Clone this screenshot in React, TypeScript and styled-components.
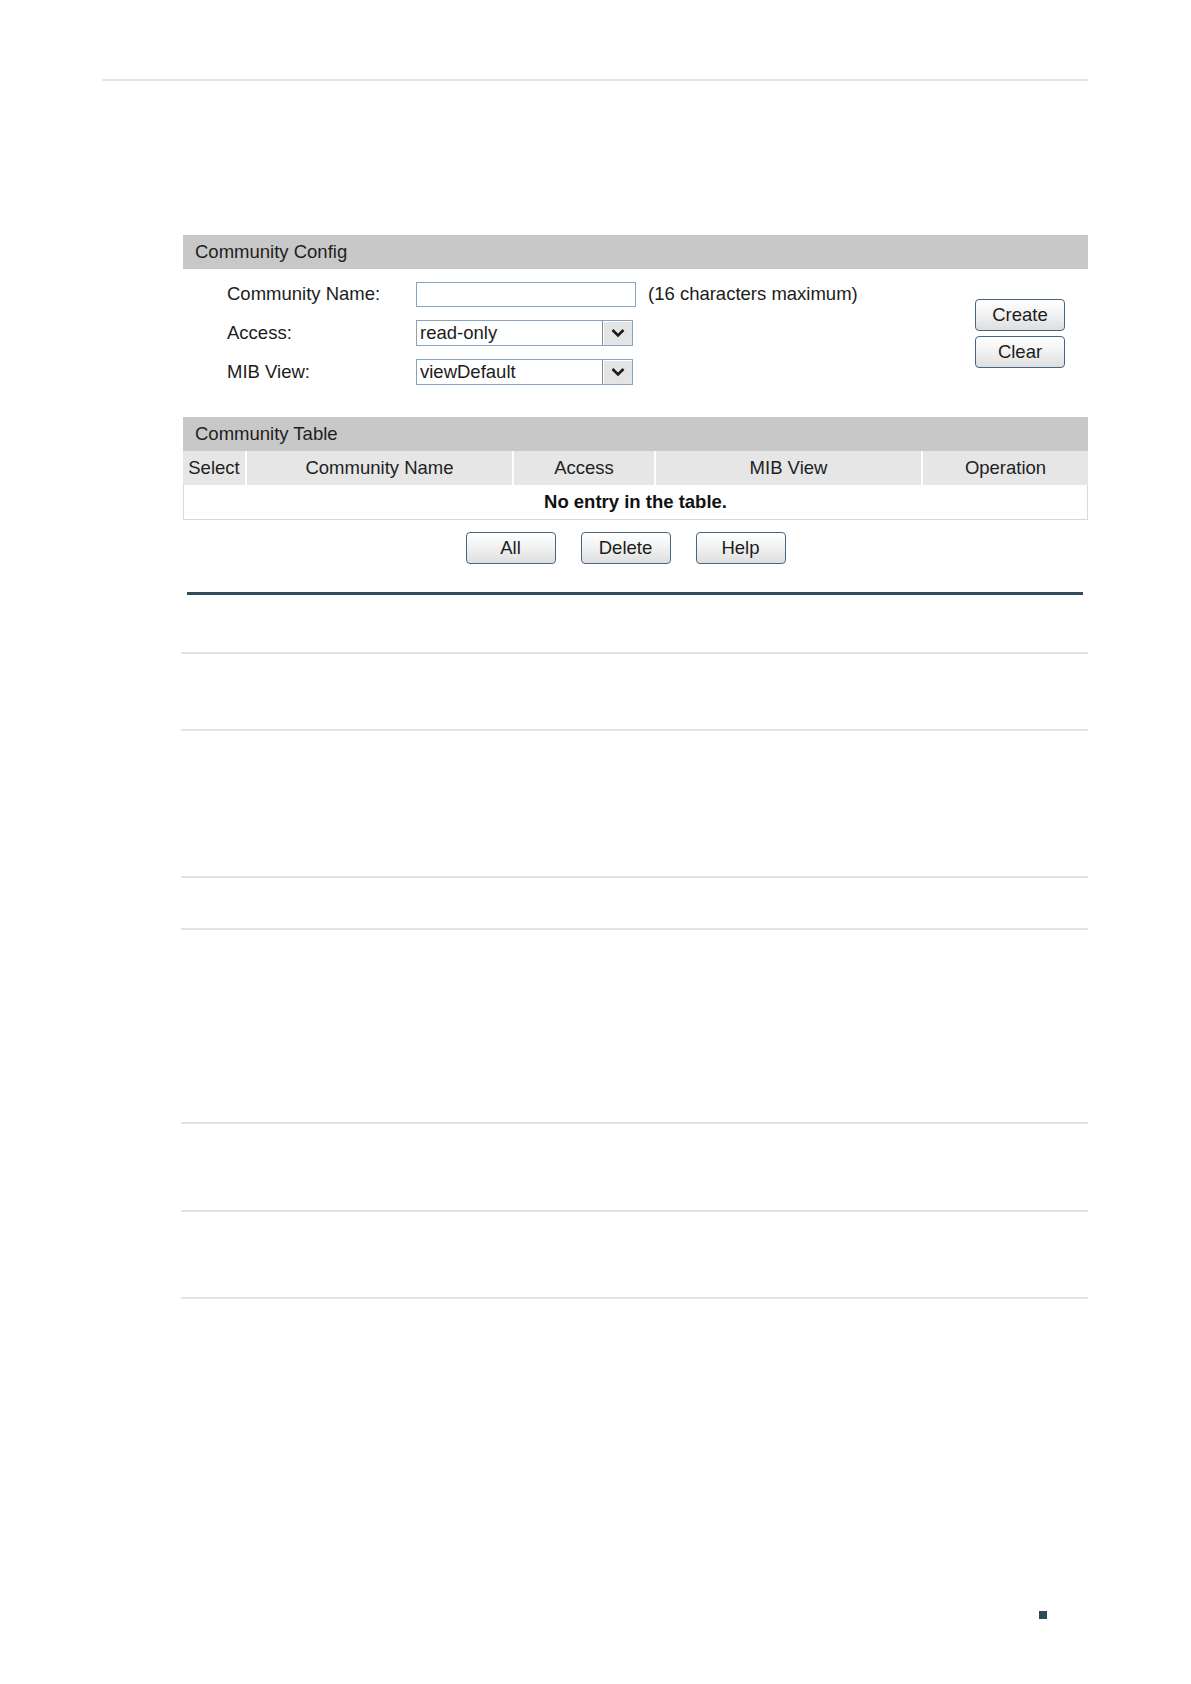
import React from "react";
import styled, { createGlobalStyle } from "styled-components";

const Global = createGlobalStyle`
  html, body { margin: 0; padding: 0; background: #ffffff; }
  body { font-family: "Liberation Sans", Arial, sans-serif; color: #1c1c1c; }
`;

const Page = styled.div`
  width: 1191px;
  min-height: 1684px;
  padding-top: 79px;
  box-sizing: border-box;
  display: flex;
  flex-direction: column;
`;

const TopRule = styled.div`
  margin-left: 102px;
  width: 986px;
  height: 2px;
  background: #e4e4e4;
`;

const Panel = styled.div`
  margin-top: 154px;
  margin-left: 183px;
  width: 905px;
  display: flex;
  flex-direction: column;
  font-size: 18.5px;
`;

const SectionHeader = styled.div`
  height: 34px;
  background: #c8c8c8;
  display: flex;
  align-items: center;
  padding-left: 12px;
  color: #1e1e1e;
`;

const ConfigBody = styled.div`
  display: flex;
  justify-content: space-between;
  height: 148px;
  box-sizing: border-box;
  padding: 12px 23px 0 44px;
`;

const FormGrid = styled.div`
  display: grid;
  grid-template-columns: 189px auto auto;
  grid-auto-rows: 26px;
  row-gap: 13px;
  align-items: center;
  align-content: start;
`;

const Label = styled.div`
  line-height: 26px;
`;

const TextInput = styled.div`
  width: 220px;
  height: 25px;
  box-sizing: border-box;
  border: 1px solid #8aa3bd;
  background: #fff;
`;

const Hint = styled.div`
  margin-left: 12px;
`;

const Select = styled.div`
  width: 217px;
  height: 26px;
  box-sizing: border-box;
  border: 1px solid #8aa3bd;
  display: flex;
  align-items: stretch;
  background: #fff;
`;

const SelectValue = styled.div`
  flex: 1;
  padding-left: 3px;
  display: flex;
  align-items: center;
`;

const SelectArrow = styled.div`
  width: 29px;
  background: #e4e4e4;
  border-left: 1px solid #8c8c8c;
  box-shadow: inset 1px 1px 0 #ffffff;
  display: flex;
  align-items: center;
  justify-content: center;
`;

const ButtonColumn = styled.div`
  display: flex;
  flex-direction: column;
  gap: 5px;
  padding-top: 18px;
`;

const Button = styled.button`
  width: 90px;
  height: 32px;
  box-sizing: border-box;
  border: 1px solid #4a6582;
  border-radius: 4px;
  background: linear-gradient(#ffffff, #f1f1f1 50%, #dedede);
  font-family: "Liberation Sans", Arial, sans-serif;
  font-size: 18.5px;
  color: #1c1c1c;
  padding: 0;
  display: flex;
  align-items: center;
  justify-content: center;
`;

const ColumnRow = styled.div`
  display: grid;
  grid-template-columns: 62px 265px 140px 265px 1fr;
  column-gap: 2px;
  height: 34px;
  background: #ffffff;
`;

const ColumnCell = styled.div`
  background: #e6e6e6;
  display: flex;
  align-items: center;
  justify-content: center;
  color: #222;
`;

const EmptyRow = styled.div`
  height: 35px;
  box-sizing: border-box;
  border: 1px solid #d9d9d9;
  border-top: none;
  display: flex;
  align-items: center;
  justify-content: center;
  font-weight: bold;
  color: #111;
`;

const ActionRow = styled.div`
  margin-top: 12px;
  display: flex;
  justify-content: center;
  gap: 25px;
  padding-right: 20px;
`;

const DarkRule = styled.div`
  margin-top: 28px;
  margin-left: 4px;
  width: 896px;
  height: 3px;
  background: #2f4c5a;
`;

const Lines = styled.div`
  margin-left: 181px;
  width: 907px;
  display: flex;
  flex-direction: column;
`;

const LineRow = styled.div<{ $h: number }>`
  height: ${(p) => p.$h}px;
  border-bottom: 2px solid #e3e3e3;
`;

const Footer = styled.div`
  margin-top: 312px;
  margin-left: 1039px;
  width: 8px;
  height: 8px;
  background: #2e4c55;
`;

const Chevron = () => (
  <svg width="16" height="12" viewBox="0 0 16 12">
    <path d="M2.5 3 L8 8.5 L13.5 3" fill="none" stroke="#1a1a1a" strokeWidth="2.6" />
  </svg>
);

const rowHeights = [57, 75, 145, 50, 192, 86, 85];

export default function App() {
  return (
    <>
      <Global />
      <Page>
        <TopRule />
        <Panel>
          <SectionHeader>Community Config</SectionHeader>
          <ConfigBody>
            <FormGrid>
              <Label>Community Name:</Label>
              <TextInput />
              <Hint>(16 characters maximum)</Hint>
              <Label>Access:</Label>
              <Select>
                <SelectValue>read-only</SelectValue>
                <SelectArrow>
                  <Chevron />
                </SelectArrow>
              </Select>
              <div />
              <Label>MIB View:</Label>
              <Select>
                <SelectValue>viewDefault</SelectValue>
                <SelectArrow>
                  <Chevron />
                </SelectArrow>
              </Select>
              <div />
            </FormGrid>
            <ButtonColumn>
              <Button>Create</Button>
              <Button>Clear</Button>
            </ButtonColumn>
          </ConfigBody>
          <SectionHeader>Community Table</SectionHeader>
          <ColumnRow>
            <ColumnCell>Select</ColumnCell>
            <ColumnCell>Community Name</ColumnCell>
            <ColumnCell>Access</ColumnCell>
            <ColumnCell>MIB View</ColumnCell>
            <ColumnCell>Operation</ColumnCell>
          </ColumnRow>
          <EmptyRow>No entry in the table.</EmptyRow>
          <ActionRow>
            <Button>All</Button>
            <Button>Delete</Button>
            <Button>Help</Button>
          </ActionRow>
          <DarkRule />
        </Panel>
        <Lines>
          {rowHeights.map((h, i) => (
            <LineRow key={i} $h={h} />
          ))}
        </Lines>
        <Footer />
      </Page>
    </>
  );
}
